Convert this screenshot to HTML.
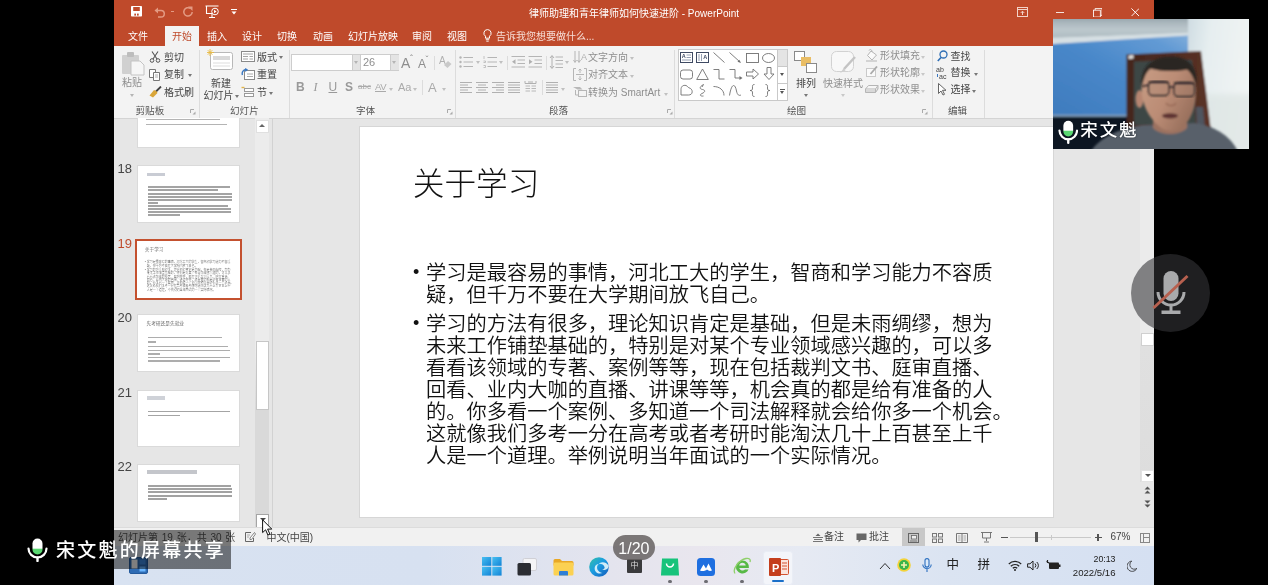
<!DOCTYPE html>
<html lang="zh-CN">
<head>
<meta charset="utf-8">
<title>律师助理和青年律师如何快速进阶 - PowerPoint</title>
<style>
*{box-sizing:border-box;margin:0;padding:0}
html,body{width:1268px;height:585px;overflow:hidden;background:#000}
body{position:relative;font-family:"Liberation Sans","Noto Sans CJK SC",sans-serif;color:#333;font-size:11px}
#root{position:absolute;left:0;top:0;width:1268px;height:585px;overflow:hidden;background:#000;will-change:transform}
.a{position:absolute}
.t{position:absolute;white-space:nowrap;line-height:1}
#ppt{left:114px;top:0;width:1040px;height:585px;background:#e6e6e6;overflow:hidden}
#titlebar{left:0;top:0;width:1040px;height:46px;background:#bf4a2b}
#ribbon{left:0;top:46px;width:1040px;height:73px;background:#f3f3f3;border-bottom:1px solid #d4d4d4}
.tab{position:absolute;top:31.800px;color:#fff;font-size:10px;white-space:nowrap;line-height:1}
.rl{position:absolute;font-size:10px;color:#444;white-space:nowrap;line-height:1}
.rd{position:absolute;font-size:10px;color:#8e8e8e;white-space:nowrap;line-height:1}
.gl{position:absolute;top:59px;font-size:9.6px;color:#555;white-space:nowrap;line-height:1}
.sep{position:absolute;top:50px;width:1px;height:64px;background:#dcdcdc}
.thumb{position:absolute;left:22.5px;width:103px;height:58px;background:#fff;border:1px solid #dadada}
.num{position:absolute;left:3.5px;font-size:13px;color:#444;line-height:1}
.tl{position:absolute;height:1px;background:#b9b9b9}
#slide{left:246px;top:127px;width:693px;height:390px;background:#fff;box-shadow:0 0 0 1px #d6d6d6}
#slide .title{position:absolute;left:52.700px;top:42.200px;font-size:31.700px;font-family:"Liberation Sans","Noto Sans CJK SC",sans-serif;font-weight:300;color:#111;line-height:1;white-space:nowrap}
#slide .body{position:absolute;left:66px;font-size:20.240px;line-height:22px;font-weight:350;margin-top:1px;color:#111;white-space:nowrap}
#slide .bul{position:absolute;left:53px;font-size:18px;line-height:22px;color:#111;margin-top:-0.300px}
.mini{position:absolute;left:0;top:0;width:693px;height:390px;transform:scale(0.1479);transform-origin:0 0}
.mini .title{position:absolute;left:53px;top:42px;font-size:31.5px;font-weight:300;color:#444;line-height:1;white-space:nowrap}
.mini .body{position:absolute;left:66px;font-size:20.2px;line-height:22px;font-weight:300;color:#4a4a4a;white-space:nowrap}
.mini .bul{position:absolute;left:52px;font-size:20px;line-height:22px;color:#555}
.mt{position:absolute;font-size:4.7px;line-height:1;color:#666;white-space:nowrap}
#status{left:0;top:527px;width:1040px;height:19px;background:#f1f1f1;border-top:1px solid #dcdcdc}
#taskbar{left:0;top:546px;width:1040px;height:39px;background:linear-gradient(90deg,#d8e2f1 0%,#d7e1f1 30%,#e4e4ee 48%,#e9e6ee 56%,#e6eaf3 66%,#dbe4f2 80%,#d5e0f2 100%)}
</style>
</head>
<body>
<div id="root">
<div id="ppt" class="a">

  <div id="titlebar" class="a">
    <!-- quick access toolbar -->
    <svg class="a" style="left:16.700px;top:6.300px" width="11" height="10.500" viewBox="0 0 11 10.500"><rect x="0" y="0" width="11" height="10.500" rx="0.800" fill="#fff"/><rect x="2.200" y="1" width="6.600" height="4" fill="#bf4a2b"/><rect x="3.300" y="7.600" width="1.700" height="2" fill="#bf4a2b"/><rect x="6" y="7.600" width="1.700" height="2" fill="#bf4a2b"/></svg>
    <svg class="a" style="left:40px;top:6px" width="12" height="12" viewBox="0 0 12 12"><path d="M2 4.5h5a3.3 3.3 0 0 1 0 6.6H4" fill="none" stroke="#e39a83" stroke-width="1.5"/><path d="M0.5 4.5L4 1.5v6z" fill="#e39a83"/></svg>
    <div class="a" style="left:57px;top:11px;width:3px;height:1px;background:#e39a83"></div>
    <svg class="a" style="left:68px;top:6px" width="12" height="12" viewBox="0 0 12 12"><path d="M8.5 2.5A4.2 4.2 0 1 0 10.2 6" fill="none" stroke="#e39a83" stroke-width="1.5"/><path d="M6 0.5h4.5V5z" fill="#e39a83"/></svg>
    <svg class="a" style="left:91px;top:5px" width="15" height="14" viewBox="0 0 15 14"><path d="M0.5 1h13M1.5 1v7.5h7M7 8.5v4M4 12.5h6" fill="none" stroke="#fff" stroke-width="1.1"/><circle cx="10" cy="6.5" r="3.3" fill="#bf4a2b" stroke="#fff" stroke-width="1"/><path d="M9 4.8v3.4l2.6-1.7z" fill="#fff"/></svg>
    <svg class="a" style="left:117px;top:9px" width="6" height="6" viewBox="0 0 6 6"><path d="M0 0.5h6" stroke="#fff" stroke-width="1"/><path d="M0.5 2.5h5L3 5.5z" fill="#fff"/></svg>
    <div class="t" style="left:0;width:1040px;text-align:center;top:9px;font-size:10px;color:#fff">律师助理和青年律师如何快速进阶 - PowerPoint</div>
    <!-- window controls -->
    <svg class="a" style="left:903px;top:7px" width="11" height="10" viewBox="0 0 11 10"><rect x="0.5" y="0.5" width="10" height="9" fill="none" stroke="#f3d2c8" stroke-width="1"/><path d="M0.5 2.5h10" stroke="#f3d2c8"/><path d="M5.5 8V4.2M3.7 6L5.5 4.2L7.3 6" fill="none" stroke="#f3d2c8" stroke-width="1"/></svg>
    <div class="a" style="left:942.300px;top:12px;width:7.500px;height:1px;background:#f6e3dd"></div>
    <svg class="a" style="left:978.800px;top:7.500px" width="9.500" height="9.500" viewBox="0 0 11 11"><rect x="0.5" y="2.5" width="8" height="8" fill="none" stroke="#fff" stroke-width="1"/><path d="M2.5 2.5v-2h8v8h-2" fill="none" stroke="#fff" stroke-width="1"/></svg>
    <svg class="a" style="left:1016.500px;top:7.700px" width="8.600" height="8.600" viewBox="0 0 11 11"><path d="M0.5 0.5l10 10M10.5 0.5l-10 10" stroke="#fff" stroke-width="1.200"/></svg>
    <!-- tabs -->
    <div class="a" style="left:51px;top:26px;width:34px;height:20px;background:#f3f3f3"></div>
    <div class="tab" style="left:14px">文件</div>
    <div class="tab" style="left:58px;color:#bf4a2b">开始</div>
    <div class="tab" style="left:93px">插入</div>
    <div class="tab" style="left:128px">设计</div>
    <div class="tab" style="left:163px">切换</div>
    <div class="tab" style="left:199px">动画</div>
    <div class="tab" style="left:234px">幻灯片放映</div>
    <div class="tab" style="left:298px">审阅</div>
    <div class="tab" style="left:333px">视图</div>
    <svg class="a" style="left:369px;top:29px" width="9" height="13" viewBox="0 0 9 13"><path d="M4.5 0.6a3.6 3.6 0 0 0-2 6.6v2h4v-2a3.6 3.6 0 0 0-2-6.6z" fill="none" stroke="#fff" stroke-width="1"/><path d="M2.8 10.7h3.4M3.3 12.2h2.4" stroke="#fff" stroke-width="0.9"/></svg>
    <div class="tab" style="left:382px;font-size:10px;color:#f6ddd5">告诉我您想要做什么...</div>
  </div>
  <div id="ribbon" class="a">
    <svg class="a" style="left:7px;top:4px" width="26" height="26" viewBox="0 0 26 26"><rect x="1" y="5" width="17" height="19" rx="1" fill="#d0d0d0"/><rect x="6" y="2" width="7" height="5" rx="1" fill="#bdbdbd"/><path d="M10 11h9l4 4v10H10z" fill="#f6f6f6" stroke="#c4c4c4"/></svg>
    <div class="rd" style="left:8px;top:32px">粘贴</div>
    <div class="a" style="left:15.5px;top:48px;width:0;height:0;border-left:2.5px solid transparent;border-right:2.5px solid transparent;border-top:3px solid #b5b5b5"></div>
    <svg class="a" style="left:35px;top:5px" width="12" height="12" viewBox="0 0 12 12"><path d="M3 0.5L8 8M9 0.5L4 8" stroke="#555" stroke-width="1.1" fill="none"/><circle cx="3" cy="9.5" r="1.8" fill="none" stroke="#555"/><circle cx="9" cy="9.5" r="1.8" fill="none" stroke="#555"/></svg>
    <div class="rl" style="left:50px;top:6.5px">剪切</div>
    <svg class="a" style="left:35px;top:23px" width="12" height="12" viewBox="0 0 12 12"><path d="M0.5 0.5h6v8h-6z" fill="#fff" stroke="#777"/><path d="M4.5 3.5h6v8h-6z" fill="#fff" stroke="#777"/><path d="M6 6h3M6 8h3" stroke="#999" stroke-width="0.8"/></svg>
    <div class="rl" style="left:50px;top:24px">复制</div>
    <div class="a" style="left:73.5px;top:28px;width:0;height:0;border-left:2.5px solid transparent;border-right:2.5px solid transparent;border-top:3px solid #777"></div>
    <svg class="a" style="left:35px;top:40px" width="13" height="12" viewBox="0 0 13 12"><path d="M12 0.5L6.5 6" stroke="#444" stroke-width="1.8"/><path d="M7.5 5.2L5 4l-4.5 5.5 3.5 2L8.5 7z" fill="#d9a63a"/></svg>
    <div class="rl" style="left:50px;top:42px">格式刷</div>
    <div class="gl" style="left:21.5px;top:60.3px">剪贴板</div>
    <svg class="a" style="left:76px;top:62.5px" width="6" height="6" viewBox="0 0 6 6"><path d="M0.5 4V0.5H4" fill="none" stroke="#aaa" stroke-width="1"/><path d="M2.5 5.5h3v-3z" fill="#aaa"/></svg>
    <div class="a" style="left:85px;top:4px;width:1px;height:68px;background:#dcdcdc"></div>
    <svg class="a" style="left:93px;top:3px" width="28" height="25" viewBox="0 0 28 25"><rect x="3.5" y="3.5" width="22" height="17" rx="2" fill="#fff" stroke="#b8b8b8"/><rect x="6" y="7" width="17" height="4" fill="#d9d9d9"/><path d="M6 14h17M6 17h17" stroke="#ddd"/><path d="M3 0v7M0 3.5h7M0.8 1.2l4.5 4.5M5.3 1.2L0.8 5.7" stroke="#e8b93f" stroke-width="0.9"/></svg>
    <div class="rl" style="left:97px;top:32.5px">新建</div>
    <div class="rl" style="left:89.5px;top:45px">幻灯片</div>
    <div class="a" style="left:120.5px;top:49px;width:0;height:0;border-left:2.5px solid transparent;border-right:2.5px solid transparent;border-top:3px solid #777"></div>
    <svg class="a" style="left:127px;top:5px" width="14" height="12" viewBox="0 0 14 12"><rect x="0.5" y="0.5" width="13" height="10" fill="#fff" stroke="#8a8a8a"/><path d="M2 3h10M2 5.5h5M2 8h5M8.5 5.5h3.5M8.5 8h3.5" stroke="#a4a4a4"/></svg>
    <div class="rl" style="left:143px;top:6.5px">版式</div>
    <div class="a" style="left:164.5px;top:10px;width:0;height:0;border-left:2.5px solid transparent;border-right:2.5px solid transparent;border-top:3px solid #777"></div>
    <svg class="a" style="left:127px;top:22px" width="14" height="13" viewBox="0 0 14 13"><rect x="3.5" y="2.5" width="10" height="9" fill="#fff" stroke="#8a8a8a"/><path d="M6 6h6M6 8.5h6" stroke="#aaa"/><path d="M5.5 1.5A4 4 0 0 0 1.5 7" fill="none" stroke="#3a78c2" stroke-width="1.4"/><path d="M4 0l3.2 1.8L4.3 4z" fill="#3a78c2"/></svg>
    <div class="rl" style="left:143px;top:24px">重置</div>
    <svg class="a" style="left:127px;top:40px" width="14" height="12" viewBox="0 0 14 12"><path d="M0.5 1.5h3" stroke="#e2b54a" stroke-width="1.4"/><rect x="3.5" y="2.5" width="9" height="3" fill="#fff" stroke="#999"/><rect x="3.5" y="7.5" width="9" height="3" fill="#fff" stroke="#999"/></svg>
    <div class="rl" style="left:143px;top:42px">节</div>
    <div class="a" style="left:155.0px;top:46px;width:0;height:0;border-left:2.5px solid transparent;border-right:2.5px solid transparent;border-top:3px solid #777"></div>
    <div class="gl" style="left:116px;top:60.3px">幻灯片</div>
    <div class="a" style="left:175px;top:4px;width:1px;height:68px;background:#dcdcdc"></div>
    <div class="a" style="left:176.5px;top:8px;width:62px;height:17px;background:#fff;border:1px solid #cdcdcd"></div>
    <div class="a" style="left:238.5px;top:8px;width:8px;height:17px;background:#e4e4e4;border-top:1px solid #cdcdcd;border-bottom:1px solid #cdcdcd"></div>
    <div class="a" style="left:240.0px;top:15px;width:0;height:0;border-left:2.5px solid transparent;border-right:2.5px solid transparent;border-top:3px solid #b5b5b5"></div>
    <div class="a" style="left:246px;top:8px;width:31px;height:17px;background:#fff;border:1px solid #cdcdcd"></div>
    <div class="rd" style="left:249px;top:11px;font-size:11px">26</div>
    <div class="a" style="left:276.5px;top:8px;width:8px;height:17px;background:#e4e4e4;border-top:1px solid #cdcdcd;border-bottom:1px solid #cdcdcd"></div>
    <div class="a" style="left:278.0px;top:15px;width:0;height:0;border-left:2.5px solid transparent;border-right:2.5px solid transparent;border-top:3px solid #b5b5b5"></div>
    <div class="rd" style="left:287px;top:10px;font-size:14px">A</div>
    <div class="rd" style="left:296px;top:8px;font-size:9px">ˆ</div>
    <div class="rd" style="left:304px;top:12px;font-size:12px">A</div>
    <div class="rd" style="left:311.5px;top:9px;font-size:9px">ˇ</div>
    <div class="a" style="left:320px;top:10px;width:1px;height:14px;background:#dcdcdc"></div>
    <svg class="a" style="left:325px;top:9px" width="13" height="14" viewBox="0 0 13 14"><text x="0" y="9" font-size="10" fill="#b0b0b0" font-family="Liberation Sans,sans-serif">A</text><path d="M5 10l4-4 3.5 3-4 4z" fill="#c9c9c9"/></svg>
    <div class="rd" style="left:182px;top:34.5px;font-size:12px;font-weight:bold;color:#999">B</div>
    <div class="rd" style="left:199.5px;top:34.5px;font-size:12px;font-style:italic;font-family:'Liberation Serif',serif;color:#999">I</div>
    <div class="rd" style="left:214.5px;top:34.5px;font-size:12px;text-decoration:underline;color:#999">U</div>
    <div class="rd" style="left:231px;top:34.5px;font-size:12px;font-weight:bold;color:#999">S</div>
    <div class="rd" style="left:244px;top:37.0px;font-size:8px;text-decoration:line-through;color:#aaa">abc</div>
    <div class="rd" style="left:261px;top:35.5px;font-size:9.5px;text-decoration:underline;color:#aaa;letter-spacing:-0.5px">AV</div>
    <div class="a" style="left:274.5px;top:42px;width:0;height:0;border-left:2.5px solid transparent;border-right:2.5px solid transparent;border-top:3px solid #c0c0c0"></div>
    <div class="rd" style="left:284px;top:35.5px;font-size:11px;color:#aaa">Aa</div>
    <div class="a" style="left:298.5px;top:42px;width:0;height:0;border-left:2.5px solid transparent;border-right:2.5px solid transparent;border-top:3px solid #c0c0c0"></div>
    <div class="a" style="left:307.5px;top:34px;width:1px;height:15px;background:#dcdcdc"></div>
    <div class="rd" style="left:314px;top:35px;font-size:13px;color:#aaa">A</div>
    <div class="a" style="left:327.5px;top:42px;width:0;height:0;border-left:2.5px solid transparent;border-right:2.5px solid transparent;border-top:3px solid #c0c0c0"></div>
    <div class="gl" style="left:242px;top:60.3px">字体</div>
    <svg class="a" style="left:333px;top:62.5px" width="6" height="6" viewBox="0 0 6 6"><path d="M0.5 4V0.5H4" fill="none" stroke="#aaa" stroke-width="1"/><path d="M2.5 5.5h3v-3z" fill="#aaa"/></svg>
    <div class="a" style="left:340.5px;top:4px;width:1px;height:68px;background:#dcdcdc"></div>
    <svg class="a" style="left:345px;top:9px" width="15" height="14" viewBox="0 0 15 14"><circle cx="1.5" cy="2.5" r="1.2" fill="#b5b5b5"/><circle cx="1.5" cy="7" r="1.2" fill="#b5b5b5"/><circle cx="1.5" cy="11.5" r="1.2" fill="#b5b5b5"/><path d="M4.5 2.5H14M4.5 7H14M4.5 11.5H14" stroke="#b5b5b5"/></svg>
    <div class="a" style="left:361.5px;top:15px;width:0;height:0;border-left:2.5px solid transparent;border-right:2.5px solid transparent;border-top:3px solid #c0c0c0"></div>
    <svg class="a" style="left:369px;top:9px" width="15" height="14" viewBox="0 0 15 14"><path d="M1 1v3M0.5 6h2v1.5h-2M0.5 10.5h2v2h-2" stroke="#b5b5b5" fill="none" stroke-width="0.8"/><path d="M4.5 2.5H14M4.5 7H14M4.5 11.5H14" stroke="#b5b5b5"/></svg>
    <div class="a" style="left:385.0px;top:15px;width:0;height:0;border-left:2.5px solid transparent;border-right:2.5px solid transparent;border-top:3px solid #c0c0c0"></div>
    <div class="a" style="left:393px;top:10px;width:1px;height:14px;background:#dcdcdc"></div>
    <svg class="a" style="left:397px;top:9px" width="15" height="14" viewBox="0 0 15 14"><path d="M0.5 1.5H14M6.5 5H14M6.5 8.5H14M0.5 12H14" stroke="#b5b5b5"/><path d="M4.5 4.2v5L1 6.7z" fill="#b0b0b0"/></svg>
    <svg class="a" style="left:414px;top:9px" width="15" height="14" viewBox="0 0 15 14"><path d="M0.5 1.5H14M6.5 5H14M6.5 8.5H14M0.5 12H14" stroke="#b5b5b5"/><path d="M1 4.2v5l3.5-2.5z" fill="#b0b0b0"/></svg>
    <div class="a" style="left:432px;top:10px;width:1px;height:14px;background:#dcdcdc"></div>
    <svg class="a" style="left:435px;top:8px" width="15" height="16" viewBox="0 0 15 16"><path d="M6.5 3H14M6.5 6.5H14M6.5 10H14M6.5 13.5H14" stroke="#b5b5b5"/><path d="M3 2v12M1 4l2-2.5L5 4M1 12l2 2.5L5 12" fill="none" stroke="#b0b0b0" stroke-width="1"/></svg>
    <div class="a" style="left:451.0px;top:15px;width:0;height:0;border-left:2.5px solid transparent;border-right:2.5px solid transparent;border-top:3px solid #c0c0c0"></div>
    <svg class="a" style="left:459px;top:4px" width="15" height="14" viewBox="0 0 15 14"><path d="M2 1v11M0.5 10L2 12.5 3.5 10M6 1v11M4.5 10L6 12.5 7.5 10" fill="none" stroke="#b5b5b5"/><text x="8" y="10" font-size="9" fill="#b0b0b0" font-family="Liberation Sans,sans-serif">A</text></svg>
    <div class="rd" style="left:474px;top:6.5px">文字方向</div>
    <div class="a" style="left:515.5px;top:11px;width:0;height:0;border-left:2.5px solid transparent;border-right:2.5px solid transparent;border-top:3px solid #c0c0c0"></div>
    <svg class="a" style="left:459px;top:22px" width="15" height="14" viewBox="0 0 15 14"><path d="M3 0.5H0.5v12H3M11 0.5h2.5v12H11" fill="none" stroke="#b5b5b5"/><path d="M3 6.5h8" stroke="#b5b5b5"/><path d="M7 1v4M5.5 2.5L7 1l1.5 1.5M7 12V8M5.5 10.5L7 12l1.5-1.5" fill="none" stroke="#b0b0b0" stroke-width="0.9"/></svg>
    <div class="rd" style="left:474px;top:24px">对齐文本</div>
    <div class="a" style="left:515.5px;top:29px;width:0;height:0;border-left:2.5px solid transparent;border-right:2.5px solid transparent;border-top:3px solid #c0c0c0"></div>
    <svg class="a" style="left:459px;top:40px" width="15" height="13" viewBox="0 0 15 13"><path d="M0 1h7l2.5 2.5H4.5z" fill="#b8b8b8"/><rect x="5.500" y="4.5" width="8" height="6" fill="#f3f3f3" stroke="#b5b5b5"/><path d="M2.500 4v5h3" fill="none" stroke="#b5b5b5"/></svg>
    <div class="rd" style="left:474px;top:42px">转换为 SmartArt</div>
    <div class="a" style="left:550.0px;top:47px;width:0;height:0;border-left:2.5px solid transparent;border-right:2.5px solid transparent;border-top:3px solid #c0c0c0"></div>
    <svg class="a" style="left:345.5px;top:35px" width="12" height="13" viewBox="0 0 12 13"><path d="M0 1.5h12" stroke="#b0b0b0"/><path d="M0 4.0h8" stroke="#b0b0b0"/><path d="M0 6.5h12" stroke="#b0b0b0"/><path d="M0 9.0h8" stroke="#b0b0b0"/><path d="M0 11.5h12" stroke="#b0b0b0"/></svg>
    <svg class="a" style="left:361.5px;top:35px" width="12" height="13" viewBox="0 0 12 13"><path d="M0 1.5h12" stroke="#b0b0b0"/><path d="M2 4.0h8" stroke="#b0b0b0"/><path d="M0 6.5h12" stroke="#b0b0b0"/><path d="M2 9.0h8" stroke="#b0b0b0"/><path d="M0 11.5h12" stroke="#b0b0b0"/></svg>
    <svg class="a" style="left:377.5px;top:35px" width="12" height="13" viewBox="0 0 12 13"><path d="M0 1.5h12" stroke="#b0b0b0"/><path d="M4 4.0h8" stroke="#b0b0b0"/><path d="M0 6.5h12" stroke="#b0b0b0"/><path d="M4 9.0h8" stroke="#b0b0b0"/><path d="M0 11.5h12" stroke="#b0b0b0"/></svg>
    <svg class="a" style="left:394px;top:35px" width="12" height="13" viewBox="0 0 12 13"><path d="M0 1.5h12" stroke="#b0b0b0"/><path d="M0 4.0h12" stroke="#b0b0b0"/><path d="M0 6.5h12" stroke="#b0b0b0"/><path d="M0 9.0h12" stroke="#b0b0b0"/><path d="M0 11.5h12" stroke="#b0b0b0"/></svg>
    <svg class="a" style="left:410px;top:34px" width="14" height="14" viewBox="0 0 14 14"><path d="M1 1v2.5h11V1" fill="none" stroke="#b0b0b0"/><path d="M1.5 6h4.5M1.500 8.5h4.500M1.500 11h4.500M7.500 6h4.500M7.500 8.500h4.500M7.500 11h4.500" stroke="#b8b8b8"/><path d="M4 2h5" stroke="#b0b0b0"/></svg>
    <div class="a" style="left:428px;top:34px;width:1px;height:15px;background:#dcdcdc"></div>
    <svg class="a" style="left:432px;top:35px" width="12" height="13" viewBox="0 0 12 13"><path d="M0 1.5h12" stroke="#b0b0b0"/><path d="M0 4.0h12" stroke="#b0b0b0"/><path d="M0 6.5h12" stroke="#b0b0b0"/><path d="M0 9.0h12" stroke="#b0b0b0"/><path d="M0 11.5h12" stroke="#b0b0b0"/></svg>
    <div class="a" style="left:447.0px;top:42px;width:0;height:0;border-left:2.5px solid transparent;border-right:2.5px solid transparent;border-top:3px solid #c0c0c0"></div>
    <div class="gl" style="left:435px;top:60.3px">段落</div>
    <svg class="a" style="left:552.5px;top:62.5px" width="6" height="6" viewBox="0 0 6 6"><path d="M0.5 4V0.5H4" fill="none" stroke="#aaa" stroke-width="1"/><path d="M2.5 5.5h3v-3z" fill="#aaa"/></svg>
    <div class="a" style="left:560px;top:4px;width:1px;height:68px;background:#dcdcdc"></div>
    <div class="a" style="left:564px;top:2.5px;width:110px;height:52px;background:#fff;border:1px solid #c9c9c9"></div>
    <div class="a" style="left:663px;top:2.5px;width:11px;height:52px;border:1px solid #c9c9c9;background:#fff"></div>
    <div class="a" style="left:664px;top:3.5px;width:9px;height:16px;background:#e4e4e4"></div>
    <div class="a" style="left:663px;top:20px;width:11px;height:1px;background:#c9c9c9"></div>
    <div class="a" style="left:663px;top:37px;width:11px;height:1px;background:#c9c9c9"></div>
    <div class="a" style="left:666.0px;top:27px;width:0;height:0;border-left:2.5px solid transparent;border-right:2.5px solid transparent;border-top:3px solid #555"></div>
    <div class="a" style="left:666px;top:42.5px;width:5px;height:1px;background:#555"></div>
    <div class="a" style="left:666.0px;top:45px;width:0;height:0;border-left:2.5px solid transparent;border-right:2.5px solid transparent;border-top:3px solid #555"></div>
    <svg class="a" style="left:566px;top:6px" width="13" height="11" viewBox="0 0 13 11"><rect x="0.5" y="0.5" width="12" height="10" fill="#fff" stroke="#3f4a63"/><text x="1.800" y="6" font-size="5.500" font-weight="bold" fill="#3f4a63" font-family="Liberation Sans,sans-serif">A</text><path d="M6.500 3h4.500M6.500 5.500h4.500M2 8h9" stroke="#7a86a0" stroke-width="0.800"/></svg>
    <svg class="a" style="left:582px;top:6px" width="13" height="11" viewBox="0 0 13 11"><rect x="0.5" y="0.5" width="12" height="10" fill="#fff" stroke="#3f4a63"/><path d="M3 2v7M5.500 2v7" stroke="#7a86a0" stroke-width="0.800"/><text x="7.300" y="6.500" font-size="5.500" font-weight="bold" fill="#3f4a63" font-family="Liberation Sans,sans-serif">A</text></svg>
    <svg class="a" style="left:599px;top:6px" width="12" height="11" viewBox="0 0 12 11"><path d="M0.5 0.5l11 10" stroke="#707070" stroke-width="0.9"/></svg>
    <svg class="a" style="left:615px;top:6px" width="13" height="12" viewBox="0 0 13 12"><path d="M0.5 0.5l10.500 9.500" stroke="#707070" stroke-width="0.9"/><path d="M12 11L8.500 9.800l1.800-2z" fill="#707070"/></svg>
    <svg class="a" style="left:632px;top:7px" width="13" height="10" viewBox="0 0 13 10"><rect x="0.5" y="0.5" width="12" height="9" fill="none" stroke="#707070" stroke-width="0.9"/></svg>
    <svg class="a" style="left:648px;top:7px" width="13" height="10" viewBox="0 0 13 10"><ellipse cx="6.500" cy="5" rx="6" ry="4.500" fill="none" stroke="#707070" stroke-width="0.9"/></svg>
    <svg class="a" style="left:566px;top:23px" width="13" height="11" viewBox="0 0 13 11"><rect x="0.5" y="1" width="12" height="9" rx="2.500" fill="none" stroke="#707070" stroke-width="0.9"/></svg>
    <svg class="a" style="left:582px;top:22px" width="13" height="12" viewBox="0 0 13 12"><path d="M6.500 1L12.300 11.500H0.700z" fill="none" stroke="#707070" stroke-width="0.9"/></svg>
    <svg class="a" style="left:599px;top:22px" width="12" height="12" viewBox="0 0 12 12"><path d="M0.500 1.500h5.500v9.500h5.500" fill="none" stroke="#707070" stroke-width="0.9"/></svg>
    <svg class="a" style="left:615px;top:22px" width="14" height="13" viewBox="0 0 14 13"><path d="M0.500 1.500h5.500v8.500h5" fill="none" stroke="#707070" stroke-width="0.9"/><path d="M13.500 10l-3-2v4z" fill="#707070"/></svg>
    <svg class="a" style="left:632px;top:22px" width="13" height="12" viewBox="0 0 13 12"><path d="M0.500 4h6.500V1L12.500 6 7 11V8H0.500z" fill="none" stroke="#707070" stroke-width="0.9"/></svg>
    <svg class="a" style="left:649px;top:21px" width="12" height="13" viewBox="0 0 12 13"><path d="M4 0.500h4v6.500h3L6 12.500 1 7h3z" fill="none" stroke="#707070" stroke-width="0.9"/></svg>
    <svg class="a" style="left:566px;top:38px" width="13" height="12" viewBox="0 0 13 12"><path d="M1 11V5.500C1 2.500 3 0.800 6 1.500 7.500 2 8 3.500 9 3.800c2 0.600 3.200 2 3.200 4C12.200 10 10.500 11 8.500 11z" fill="none" stroke="#707070" stroke-width="0.9"/></svg>
    <svg class="a" style="left:583px;top:38px" width="11" height="13" viewBox="0 0 11 13"><path d="M6.500 0.500C2 3 2.500 5 5.500 5.500s3 2.500-0.500 4c-3 1.300-1.500 3 1.500 2.500M5 3l1.500-2.500" fill="none" stroke="#707070" stroke-width="0.9"/></svg>
    <svg class="a" style="left:599px;top:39px" width="12" height="11" viewBox="0 0 12 11"><path d="M0.500 1.500C6.500 1.500 11 5 11 10.500" fill="none" stroke="#707070" stroke-width="0.9"/></svg>
    <svg class="a" style="left:615px;top:39px" width="13" height="11" viewBox="0 0 13 11"><path d="M0.500 10.500C2.500 -2 6 -2 7.500 6c0.800 4 2.500 5 4.500 4" fill="none" stroke="#707070" stroke-width="0.9"/></svg>
    <svg class="a" style="left:635px;top:38px" width="6" height="13" viewBox="0 0 6 13"><path d="M5.500 0.500C3 0.500 3.500 2 3.500 4S3 6.500 1 6.500C3 6.500 3.500 7 3.500 9s-0.500 3.500 2 3.500" fill="none" stroke="#707070" stroke-width="0.9"/></svg>
    <svg class="a" style="left:651px;top:38px" width="6" height="13" viewBox="0 0 6 13"><path d="M0.500 0.500C3 0.500 2.500 2 2.500 4S3 6.500 5 6.500C3 6.500 2.500 7 2.500 9s0.500 3.500-2 3.500" fill="none" stroke="#707070" stroke-width="0.9"/></svg>
    <svg class="a" style="left:680px;top:5px" width="24" height="23" viewBox="0 0 24 23"><rect x="0.500" y="0.500" width="10" height="9" fill="#fff" stroke="#8a8a8a"/><rect x="7" y="6" width="10" height="9" fill="#e9bd64"/><rect x="12.500" y="12.500" width="10" height="9" fill="#fff" stroke="#8a8a8a"/></svg>
    <div class="rl" style="left:682px;top:32.5px">排列</div>
    <div class="a" style="left:690.0px;top:48px;width:0;height:0;border-left:2.5px solid transparent;border-right:2.5px solid transparent;border-top:3px solid #777"></div>
    <svg class="a" style="left:716px;top:5px" width="27" height="24" viewBox="0 0 27 24"><rect x="1.500" y="0.500" width="22" height="20" rx="5" fill="#f8f8f8" stroke="#d2d2d2"/><path d="M25 6L14 18" stroke="#c4c4c4" stroke-width="2.500"/><path d="M14 17l-4 5 5.500-2.500z" fill="#cfcfcf"/></svg>
    <div class="rd" style="left:709px;top:32.5px">快速样式</div>
    <div class="a" style="left:726.5px;top:48px;width:0;height:0;border-left:2.5px solid transparent;border-right:2.5px solid transparent;border-top:3px solid #c8c8c8"></div>
    <svg class="a" style="left:752px;top:3px" width="12" height="13" viewBox="0 0 12 13"><path d="M5 2L1.500 6.500 6 11l4.500-5z" fill="#fafafa" stroke="#b5b5b5"/><path d="M3 1.500C3.500 0 6 0 6 3" fill="none" stroke="#b5b5b5"/><path d="M0 12h11" stroke="#c9c9c9" stroke-width="1.500"/></svg>
    <div class="rd" style="left:766px;top:5px">形状填充</div>
    <div class="a" style="left:807.0px;top:10px;width:0;height:0;border-left:2.5px solid transparent;border-right:2.5px solid transparent;border-top:3px solid #c8c8c8"></div>
    <svg class="a" style="left:752px;top:20px" width="12" height="13" viewBox="0 0 12 13"><rect x="0.500" y="2.500" width="9" height="8" fill="#fafafa" stroke="#c9c9c9"/><path d="M11 0.500L4.500 8" stroke="#aaa" stroke-width="1.800"/></svg>
    <div class="rd" style="left:766px;top:22px">形状轮廓</div>
    <div class="a" style="left:807.0px;top:27px;width:0;height:0;border-left:2.5px solid transparent;border-right:2.5px solid transparent;border-top:3px solid #c8c8c8"></div>
    <svg class="a" style="left:751px;top:37px" width="14" height="12" viewBox="0 0 14 12"><path d="M0.500 6L3.500 2.500h9.500L10.500 6z" fill="#f6f6f6" stroke="#b5b5b5"/><path d="M0.500 6v3.500h10V6M10.500 9.500L13 6V2.500" fill="#d8d8d8" stroke="#b5b5b5"/></svg>
    <div class="rd" style="left:766px;top:39px">形状效果</div>
    <div class="a" style="left:807.0px;top:44px;width:0;height:0;border-left:2.5px solid transparent;border-right:2.5px solid transparent;border-top:3px solid #c8c8c8"></div>
    <div class="gl" style="left:673px;top:60.3px">绘图</div>
    <svg class="a" style="left:808px;top:62.5px" width="6" height="6" viewBox="0 0 6 6"><path d="M0.5 4V0.5H4" fill="none" stroke="#aaa" stroke-width="1"/><path d="M2.5 5.5h3v-3z" fill="#aaa"/></svg>
    <div class="a" style="left:818px;top:4px;width:1px;height:68px;background:#dcdcdc"></div>
    <svg class="a" style="left:823px;top:4px" width="11" height="12" viewBox="0 0 11 12"><circle cx="6.500" cy="4.500" r="3.500" fill="none" stroke="#2f6fb5" stroke-width="1.300"/><path d="M4 7.500L0.800 11" stroke="#2f6fb5" stroke-width="1.600"/></svg>
    <div class="rl" style="left:836.5px;top:5.5px">查找</div>
    <svg class="a" style="left:822px;top:20px" width="13" height="13" viewBox="0 0 13 13"><text x="0" y="6" font-size="7" fill="#444" font-family="Liberation Sans,sans-serif">ab</text><text x="3" y="12.500" font-size="7" fill="#444" font-family="Liberation Sans,sans-serif">ac</text><path d="M1.500 8v3" stroke="#3a78c2"/></svg>
    <div class="rl" style="left:836.5px;top:22px">替换</div>
    <div class="a" style="left:860.0px;top:27px;width:0;height:0;border-left:2.5px solid transparent;border-right:2.5px solid transparent;border-top:3px solid #777"></div>
    <svg class="a" style="left:824px;top:37px" width="9" height="13" viewBox="0 0 9 13"><path d="M0.500 0.500v10l2.500-2.500 2 4 1.500-0.700-2-4H8z" fill="#fff" stroke="#555" stroke-width="0.900"/></svg>
    <div class="rl" style="left:836.5px;top:39px">选择</div>
    <div class="a" style="left:857.5px;top:44px;width:0;height:0;border-left:2.5px solid transparent;border-right:2.5px solid transparent;border-top:3px solid #777"></div>
    <div class="gl" style="left:834px;top:60.3px">编辑</div>
    <div class="a" style="left:870px;top:4px;width:1px;height:68px;background:#dcdcdc"></div>
  </div>
  <!-- thumbnail pane -->
  <div id="pane" class="a" style="left:0;top:0;width:158px;height:585px">
    <div class="a" style="left:157.500px;top:119px;width:1px;height:408px;background:#d2d2d2"></div>
    <div class="a" style="left:141px;top:118px;width:14px;height:409px;background:linear-gradient(180deg,#ececec 0,#ececec 230px,#d9d9d9 290px,#d9d9d9 100%)"></div>
    <div class="a" style="left:141.5px;top:119.5px;width:13px;height:13px;background:#fff;border:1px solid #e0e0e0"></div>
    <div class="a" style="left:145px;top:124px;width:0;height:0;border-left:3px solid transparent;border-right:3px solid transparent;border-bottom:3.5px solid #666"></div>
    <div class="a" style="left:141.5px;top:341px;width:13.500px;height:68.500px;background:#fff;border:1px solid #c6c6c6"></div>
    <div class="a" style="left:141.5px;top:514px;width:13.5px;height:13.5px;background:#fff;border:1px solid #a5a5a5"></div>
    <div class="a" style="left:145.5px;top:518px;width:0;height:0;border-left:3px solid transparent;border-right:3px solid transparent;border-top:3.5px solid #444"></div>
    <div class="thumb" style="top:118px;height:30px;border-top:none"><div class="tl" style="left:8.500px;top:0.500px;width:74px;height:1.500px;background:#b4b4b4"></div><div class="tl" style="left:8.500px;top:5.500px;width:81px;height:1.500px;background:#b4b4b4"></div></div>
    <div class="num" style="top:161.5px">18</div><div class="thumb" style="top:165px;height:58px"><div class="tl" style="left:9px;top:6.5px;width:18px;height:3.5px;background:#c9ccd4"></div><div class="tl" style="left:10px;top:20px;width:82px;height:2px;background:#a4a4a4"></div><div class="tl" style="left:10px;top:23px;width:70px;height:2px;background:#a4a4a4"></div><div class="tl" style="left:10px;top:26.5px;width:84px;height:2px;background:#a4a4a4"></div><div class="tl" style="left:10px;top:29.5px;width:84px;height:2px;background:#a4a4a4"></div><div class="tl" style="left:10px;top:32.5px;width:84px;height:2px;background:#a4a4a4"></div><div class="tl" style="left:10px;top:35.5px;width:10px;height:2px;background:#a4a4a4"></div><div class="tl" style="left:10px;top:38.5px;width:80px;height:2px;background:#a4a4a4"></div><div class="tl" style="left:10px;top:42px;width:83px;height:2px;background:#a4a4a4"></div><div class="tl" style="left:10px;top:45px;width:83px;height:2px;background:#a4a4a4"></div><div class="tl" style="left:10px;top:48px;width:32px;height:2px;background:#a4a4a4"></div></div>
    <div class="num" style="top:236.5px;color:#bf4a2b">19</div><div class="thumb" style="left:21px;top:238.5px;width:106.5px;height:61.5px;border:2px solid #c4512f"><div class="mini"><div class="title">关于学习</div><div class="bul" style="top:134px">•</div><div class="body" style="top:134px">学习是最容易的事情，河北工大的学生，智商和学习能力不容质<br>疑，但千万不要在大学期间放飞自己。</div><div class="bul" style="top:185px">•</div><div class="body" style="top:185px">学习的方法有很多，理论知识肯定是基础，但是未雨绸缪，想为<br>未来工作铺垫基础的，特别是对某个专业领域感兴趣的，可以多<br>看看该领域的专著、案例等等，现在包括裁判文书、庭审直播、<br>回看、业内大咖的直播、讲课等等，机会真的都是给有准备的人<br>的。你多看一个案例、多知道一个司法解释就会给你多一个机会。<br>这就像我们多考一分在高考或者考研时能淘汰几十上百甚至上千<br>人是一个道理。举例说明当年面试的一个实际情况。</div></div></div>
    <div class="num" style="top:310.5px">20</div><div class="thumb" style="top:314px;height:58px"><div class="mt" style="left:9px;top:6.5px">先考研还是先就业</div><div class="tl" style="left:10px;top:21.5px;width:74px;height:1.5px;background:#adadad"></div><div class="tl" style="left:10px;top:26px;width:8px;height:1.5px;background:#adadad"></div><div class="tl" style="left:10px;top:30.5px;width:80px;height:1.5px;background:#adadad"></div><div class="tl" style="left:10px;top:34.5px;width:82px;height:1.5px;background:#adadad"></div><div class="tl" style="left:10px;top:38px;width:12px;height:1.5px;background:#adadad"></div><div class="tl" style="left:10px;top:41.5px;width:82px;height:1.5px;background:#adadad"></div><div class="tl" style="left:10px;top:45px;width:72px;height:1.5px;background:#adadad"></div></div>
    <div class="num" style="top:386.0px">21</div><div class="thumb" style="top:389.5px;height:57.5px"><div class="tl" style="left:9px;top:5.500px;width:18px;height:3.5px;background:#cfd2d8"></div><div class="tl" style="left:10px;top:20px;width:82px;height:1.5px;background:#a4a4a4"></div><div class="tl" style="left:10px;top:24px;width:32px;height:1.5px;background:#a4a4a4"></div></div>
    <div class="num" style="top:460.0px">22</div><div class="thumb" style="top:463.5px;height:58px"><div class="tl" style="left:9px;top:5.500px;width:50px;height:4px;background:#c4c6cb"></div><div class="tl" style="left:10px;top:20px;width:83px;height:2px;background:#a2a2a2"></div><div class="tl" style="left:10px;top:23.400px;width:84px;height:2px;background:#a2a2a2"></div><div class="tl" style="left:10px;top:26.800px;width:84px;height:2px;background:#a2a2a2"></div><div class="tl" style="left:10px;top:30.200px;width:84px;height:2px;background:#a2a2a2"></div><div class="tl" style="left:10px;top:33.600px;width:19px;height:2px;background:#a2a2a2"></div></div>
  </div>
  <!-- editor scrollbar -->
  <div class="a" style="left:1026px;top:118px;width:14px;height:364px;background:linear-gradient(180deg,#ebebeb 0,#ebebeb 215px,#e0e0e0 228px,#dddddd 100%)"></div>
  <div class="a" style="left:1026.5px;top:333px;width:13.5px;height:13px;background:#fff;border:1px solid #d0d0d0"></div>
  <div class="a" style="left:1026.5px;top:469.5px;width:13.5px;height:12px;background:#fff;border:1px solid #e2e2e2"></div>
  <div class="a" style="left:1030.5px;top:474px;width:0;height:0;border-left:3px solid transparent;border-right:3px solid transparent;border-top:3.5px solid #555"></div>
  <svg class="a" style="left:1030px;top:486px" width="7" height="22" viewBox="0 0 7 22"><path d="M0.500 3.500L3.500 0.500l3 3zM0.500 7.500L3.500 4.500l3 3zM0.500 14.500l3 3 3-3zM0.500 18.500l3 3 3-3z" fill="#555"/></svg>
  <div id="slide" class="a">
    <div class="title">关于学习</div>
    <div class="bul" style="top:134px">•</div>
    <div class="body" style="top:134px">学习是最容易的事情，河北工大的学生，智商和学习能力不容质<br>疑，但千万不要在大学期间放飞自己。</div>
    <div class="bul" style="top:185px">•</div>
    <div class="body" style="top:185px">学习的方法有很多，理论知识肯定是基础，但是未雨绸缪，想为<br>未来工作铺垫基础的，特别是对某个专业领域感兴趣的，可以多<br>看看该领域的专著、案例等等，现在包括裁判文书、庭审直播、<br>回看、业内大咖的直播、讲课等等，机会真的都是给有准备的人<br>的。你多看一个案例、多知道一个司法解释就会给你多一个机会。<br>这就像我们多考一分在高考或者考研时能淘汰几十上百甚至上千<br>人是一个道理。举例说明当年面试的一个实际情况。</div>
  </div>
  <div id="status" class="a">
    <div class="t" style="left:4px;top:4.500px;font-size:10px;word-spacing:1px;color:#555">幻灯片第 19 张，共 30 张</div>
    <svg class="a" style="left:130.5px;top:4px" width="11" height="10" viewBox="0 0 11 10"><path d="M6 0.500H0.500v9h8V6" fill="none" stroke="#666"/><path d="M2 3h3M2 5h2" stroke="#999" stroke-width="0.800"/><path d="M9.500 0.500L5 6v1.500h1.500L10.500 2z" fill="#fff" stroke="#666" stroke-width="0.800"/></svg>
    <div class="t" style="left:152.500px;top:4.500px;font-size:10px;color:#444">中文(中国)</div>
    <svg class="a" style="left:698.5px;top:5px" width="10" height="9" viewBox="0 0 10 9"><path d="M0 8.500h10M1 6.500h8M0 4.500h10" stroke="#666" stroke-width="0.900"/><path d="M2.500 3L5 0.500 7.500 3z" fill="#666"/></svg>
    <div class="t" style="left:710px;top:4px;font-size:10px;color:#444">备注</div>
    <svg class="a" style="left:742px;top:4.5px" width="11" height="10" viewBox="0 0 11 10"><path d="M0.500 0.500h10v6.500H5L2.500 9.500V7H0.500z" fill="#666"/></svg>
    <div class="t" style="left:755px;top:4px;font-size:10px;color:#444">批注</div>
    <div class="a" style="left:787.5px;top:0;width:23px;height:18px;background:#c8c8c8"></div>
    <svg class="a" style="left:793.5px;top:4.5px" width="11" height="10" viewBox="0 0 11 10"><rect x="0.500" y="0.500" width="10" height="9" fill="none" stroke="#666"/><rect x="3.500" y="2.500" width="5" height="3.500" fill="#eee" stroke="#666" stroke-width="0.800"/><path d="M2 8h7" stroke="#666" stroke-width="0.800"/></svg>
    <svg class="a" style="left:818px;top:4.5px" width="11" height="10" viewBox="0 0 11 10"><rect x="0.500" y="0.500" width="4" height="3.500" fill="none" stroke="#777"/><rect x="6.500" y="0.500" width="4" height="3.500" fill="none" stroke="#777"/><rect x="0.500" y="6" width="4" height="3.500" fill="none" stroke="#777"/><rect x="6.500" y="6" width="4" height="3.500" fill="none" stroke="#777"/></svg>
    <svg class="a" style="left:842px;top:4.5px" width="12" height="10" viewBox="0 0 12 10"><path d="M0.500 0.500h11v9h-11zM6 0.500v9" fill="none" stroke="#777"/><path d="M2 3h2.500M2 5h2.500M2 7h2.500M7.500 3H10M7.500 5H10M7.500 7H10" stroke="#999" stroke-width="0.800"/></svg>
    <svg class="a" style="left:866.5px;top:4px" width="11" height="11" viewBox="0 0 11 11"><path d="M0 0.500h11M1.500 0.500v5.500h8V0.500M5.500 6v3M3 10h5" fill="none" stroke="#777"/></svg>
    <div class="a" style="left:887px;top:8.5px;width:7px;height:1.5px;background:#555"></div>
    <div class="a" style="left:896px;top:9px;width:81px;height:1px;background:#c9c9c9"></div>
    <div class="a" style="left:936.5px;top:7px;width:1px;height:5px;background:#c9c9c9"></div>
    <div class="a" style="left:920.5px;top:4px;width:3.5px;height:10px;background:#555"></div>
    <div class="a" style="left:980.5px;top:8.5px;width:7px;height:1.500px;background:#555"></div>
    <div class="a" style="left:983.2px;top:5.8px;width:1.500px;height:7px;background:#555"></div>
    <div class="t" style="left:996.5px;top:4px;font-size:10px;color:#444">67%</div>
    <svg class="a" style="left:1026px;top:4.5px" width="10" height="10" viewBox="0 0 10 10"><rect x="0.500" y="0.500" width="9" height="9" fill="none" stroke="#888"/><path d="M3.500 0.500v9M3.500 4.500h6" stroke="#888"/></svg>
  </div>
  <div id="taskbar" class="a">
    <svg class="a" style="left:14.5px;top:11px" width="19" height="17" viewBox="0 0 19 17"><rect x="0.500" y="0.500" width="18" height="16" rx="1.500" fill="#2f6cb4" stroke="#245a9c"/><rect x="2.500" y="2.500" width="6" height="9" fill="#fff"/><rect x="10.500" y="9.500" width="6" height="5" fill="#6bb6ff"/><rect x="10.500" y="2.500" width="6" height="5" fill="#3f8ae0"/></svg>
    <svg class="a" style="left:367.5px;top:11px" width="20" height="19" viewBox="0 0 20 19"><defs><linearGradient id="wg" x1="0" y1="0" x2="1" y2="1"><stop offset="0" stop-color="#49c0f2"/><stop offset="1" stop-color="#1283d6"/></linearGradient></defs><rect x="0" y="0" width="9.300" height="8.800" fill="url(#wg)"/><rect x="10.300" y="0" width="9.300" height="8.800" fill="url(#wg)"/><rect x="0" y="9.800" width="9.300" height="8.800" fill="url(#wg)"/><rect x="10.300" y="9.800" width="9.300" height="8.800" fill="url(#wg)"/></svg>
    <svg class="a" style="left:403px;top:11.5px" width="20" height="18" viewBox="0 0 20 18"><rect x="6" y="0.500" width="13.500" height="12" rx="1.500" fill="#f4f4f6" stroke="#d0d0d6"/><rect x="0.500" y="5" width="13.500" height="12.500" rx="1.500" fill="#2b2d33"/></svg>
    <svg class="a" style="left:438.5px;top:11.5px" width="21" height="18" viewBox="0 0 21 18"><path d="M0.500 2.500a1.500 1.500 0 0 1 1.500-1.500h5l2 2h10a1.500 1.500 0 0 1 1.500 1.500v3h-20z" fill="#e9a825"/><rect x="0.500" y="4.500" width="20" height="13" rx="1.500" fill="#fbd152"/><path d="M6 17.500v-3.500a1 1 0 0 1 1-1h7a1 1 0 0 1 1 1v3.500z" fill="#2f7fd6"/></svg>
    <svg class="a" style="left:475px;top:10.5px" width="20" height="20" viewBox="0 0 20 20"><defs><linearGradient id="eg" x1="0" y1="0" x2="1" y2="1"><stop offset="0" stop-color="#35c1a5"/><stop offset="0.450" stop-color="#1b9de2"/><stop offset="1" stop-color="#1459b8"/></linearGradient></defs><circle cx="10" cy="10" r="9.800" fill="url(#eg)"/><path d="M19.500 8.500C17 4 10.500 4 8.500 8.500c-1.500 3.500 1 7 5 7.500-5.500 2-9-2.500-7.500-6.500C7.500 6 14 5.500 15.500 10c0.500 1.500-1 2.500-2.500 2 3 2.500 7.500-0.500 6.500-3.500z" fill="#dff4fb" opacity="0.92"/></svg>
    <div class="a" style="left:513px;top:13px;width:15px;height:14px;background:#3a3a3c;border-radius:1px"></div>
    <div class="t" style="left:516.5px;top:16px;font-size:8px;color:#ddd">中</div>
    <svg class="a" style="left:547px;top:11.5px" width="18" height="18" viewBox="0 0 18 18"><path d="M1 0.500h16l1 17H0z" fill="#17c37b"/><path d="M5.500 5.500a3.500 3.500 0 0 0 7 0" fill="none" stroke="#fff" stroke-width="1.500"/></svg>
    <svg class="a" style="left:583px;top:11.5px" width="18" height="18" viewBox="0 0 18 18"><rect x="0" y="0" width="18" height="18" rx="3.500" fill="#1f6fe0"/><path d="M3 12.500l3.500-6 2.500 4 2.500-5 3.500 7c-2 0.800-3.500 0.500-5-1-1.500 1.500-4.500 2-7 1z" fill="#fff"/></svg>
    <svg class="a" style="left:619px;top:10.5px" width="19" height="19" viewBox="0 0 19 19"><path d="M9.500 3.500a6.500 6.500 0 1 0 6 9h-3.500a3.500 3.500 0 0 1-5.800-1.500h9.700a6.500 6.500 0 0 0-6.400-7.500zm-3.300 5a3.300 3.300 0 0 1 6.500 0z" fill="#58b947"/><path d="M2 16.500C-1 12 6 3 13 1.500c3-0.600 5 0.500 4 3.500" fill="none" stroke="#8fd06a" stroke-width="1.300"/></svg>
    <div class="a" style="left:648.5px;top:5px;width:30px;height:34px;background:#f3f5fa;border-radius:3px;border:1px solid #e9edf5"></div>
    <svg class="a" style="left:654.5px;top:11.5px" width="20" height="18" viewBox="0 0 20 18"><rect x="6" y="1.500" width="13.500" height="15" rx="1" fill="#fbe3dc" stroke="#d35230"/><path d="M13 5h5M13 8h5M13 11h5" stroke="#d35230" stroke-width="1.200"/><rect x="0" y="0" width="12" height="18" rx="1" fill="#c43e1c"/><text x="3" y="13.500" font-size="11" font-weight="bold" fill="#fff" font-family="Liberation Sans,sans-serif">P</text></svg>
    <div class="a" style="left:658px;top:33.5px;width:12px;height:2.500px;border-radius:1.500px;background:#1a6fc9"></div>
    <div class="a" style="left:553.5px;top:33.5px;width:4.500px;height:3px;border-radius:1.500px;background:#6c6c72"></div>
    <div class="a" style="left:589.5px;top:33.5px;width:4.500px;height:3px;border-radius:1.500px;background:#6c6c72"></div>
    <div class="a" style="left:625.5px;top:33.5px;width:4.500px;height:3px;border-radius:1.500px;background:#6c6c72"></div>
    <svg class="a" style="left:764.5px;top:15.5px" width="12" height="8" viewBox="0 0 12 8"><path d="M1 7l5-5.500L11 7" fill="none" stroke="#333" stroke-width="1"/></svg>
    <svg class="a" style="left:783px;top:12px" width="14" height="14" viewBox="0 0 14 14"><circle cx="7" cy="7" r="6.800" fill="#f3d33a"/><circle cx="7" cy="7" r="5" fill="#3bb54a"/><path d="M4 7h6M7 4v6" stroke="#f9f3b0" stroke-width="1.600"/></svg>
    <svg class="a" style="left:808px;top:12px" width="10" height="15" viewBox="0 0 10 15"><rect x="3" y="0.600" width="4" height="8.500" rx="2" fill="#dbe9f8" stroke="#2c6fc0" stroke-width="1.100"/><path d="M0.800 6.500a4.200 4.200 0 0 0 8.400 0M5 11v3" fill="none" stroke="#2c6fc0" stroke-width="1.100"/></svg>
    <div class="t" style="left:832.5px;top:12.5px;font-size:12.500px;color:#222">中</div>
    <div class="t" style="left:863.5px;top:12.5px;font-size:12.500px;color:#222">拼</div>
    <svg class="a" style="left:893.5px;top:13.5px" width="14" height="11" viewBox="0 0 14 11"><path d="M0.800 4a8.800 8.800 0 0 1 12.400 0M2.800 6.200a6 6 0 0 1 8.400 0M4.800 8.300a3.200 3.200 0 0 1 4.400 0" fill="none" stroke="#222" stroke-width="1.200"/><circle cx="7" cy="10" r="1" fill="#222"/></svg>
    <svg class="a" style="left:913px;top:13.5px" width="13" height="11" viewBox="0 0 13 11"><path d="M0.600 3.800h2.400L6 1v9L3 7.200H0.600z" fill="none" stroke="#222" stroke-width="1"/><path d="M8 3.500a3 3 0 0 1 0 4M9.800 2a5.200 5.200 0 0 1 0 7" fill="none" stroke="#222" stroke-width="1"/></svg>
    <svg class="a" style="left:932px;top:13.5px" width="15" height="11" viewBox="0 0 15 11"><rect x="3" y="2.500" width="10" height="6.500" rx="1" fill="#222"/><rect x="13" y="4.500" width="1.500" height="2.500" fill="#222"/><path d="M0.500 1.500c2 0 2 2 3.500 2M1.500 0v3" stroke="#222" stroke-width="1.200" fill="none"/></svg>
    <div class="t" style="left:941.5px;top:9px;width:60px;text-align:right;font-size:8.800px;color:#222">20:13</div>
    <div class="t" style="left:941.5px;top:21.5px;width:60px;text-align:right;font-size:9.600px;color:#222">2022/5/16</div>
    <svg class="a" style="left:1012.500px;top:13.500px" width="10.300" height="12.500" viewBox="0 0 12 14"><path d="M5.500 1a6 6 0 1 0 6 8.500A5 5 0 0 1 5.500 1z" fill="none" stroke="#222" stroke-width="0.900"/></svg>
  </div>
</div>
<!-- mouse cursor -->
<svg class="a" style="left:261.500px;top:519.300px" width="12" height="17" viewBox="0 0 12 17"><path d="M0.600 0.800v12.800l3-2.800 2.300 5.200 2-0.900-2.300-5h4.200z" fill="#fff" stroke="#111" stroke-width="1" stroke-linejoin="round"/></svg>
<!-- webcam tile -->
<svg class="a" style="left:1053px;top:19px" width="196" height="130" viewBox="0 0 196 130">
  <defs>
    <filter id="bl" x="-5%" y="-5%" width="110%" height="110%"><feGaussianBlur stdDeviation="1"/></filter>
    <filter id="bl3" x="-10%" y="-10%" width="120%" height="120%"><feGaussianBlur stdDeviation="2.500"/></filter>
    <linearGradient id="blind" x1="0" y1="1" x2="1" y2="0"><stop offset="0" stop-color="#3f7bbd"/><stop offset="0.500" stop-color="#4887c9"/><stop offset="0.850" stop-color="#629ad4"/><stop offset="1" stop-color="#80addb"/></linearGradient>
    <linearGradient id="ceil" x1="0" y1="0" x2="0" y2="1"><stop offset="0" stop-color="#87959c"/><stop offset="0.350" stop-color="#a9b6bc"/><stop offset="0.650" stop-color="#bcc8cd"/><stop offset="1" stop-color="#aebbc1"/></linearGradient>
    <linearGradient id="wall" x1="0" y1="0" x2="1" y2="0.300"><stop offset="0" stop-color="#cfdce2"/><stop offset="0.350" stop-color="#e6eef0"/><stop offset="1" stop-color="#f1f5f4"/></linearGradient>
    <linearGradient id="skin" x1="0" y1="0" x2="1" y2="0.600"><stop offset="0" stop-color="#c89d85"/><stop offset="0.550" stop-color="#bb8c75"/><stop offset="1" stop-color="#99705d"/></linearGradient>
    <linearGradient id="door" x1="0" y1="0" x2="1" y2="0"><stop offset="0" stop-color="#43261e"/><stop offset="1" stop-color="#5c3226"/></linearGradient>
    <clipPath id="cc"><rect x="0" y="0" width="196" height="130"/></clipPath>
  </defs>
  <g clip-path="url(#cc)">
  <rect x="0" y="0" width="196" height="130" fill="#dfe8ea"/>
  <g filter="url(#bl)">
    <rect x="-5" y="-5" width="206" height="140" fill="#dfe8ea"/>
    <path d="M-5 -5H140V14L-5 19z" fill="url(#ceil)"/>
    <path d="M-5 19.500L138 13.500V17L-5 26z" fill="#d6dfe3"/>
    <path d="M-5 25.500L136 16.500V97H-5z" fill="url(#blind)"/>
    <rect x="135" y="-5" width="66" height="140" fill="url(#wall)"/>
    <path d="M150 75h51v60h-51z" fill="#d9e1df" opacity="0.550" filter="url(#bl3)"/>
    <path d="M-5 95.500H76V98H-5z" fill="#7d9bbb"/>
    <path d="M-5 97.800H76V135H-5z" fill="#0f1824"/>
    <path d="M73.500 35.500L148 32L161 135H73.500z" fill="url(#door)"/>
    <path d="M81 42.500L139 41L143 106H81z" fill="#3d4644"/>
    <path d="M75.500 36.500l5-0.500v3.500l-5 0.500z" fill="#e4e4e4"/>
    <path d="M143 88l7 0 2 22h-8z" fill="#50545f"/>
  </g>
  <g filter="url(#bl)">
    <path d="M36 135C46 118 66 110 89 106L142 104C166 108 180 120 186 135z" fill="#58616b"/>
    <path d="M100 100h34v9c-8 8-26 8-34 0z" fill="#9c7260"/>
    <ellipse cx="86.500" cy="80" rx="4" ry="9" fill="#b68571"/>
    <path d="M88.500 70C88 54 98 45 116 45c17 0 27 8 27 27c0 14-4 27-12 35c-7 6.500-18 6.500-25 0C96 99 89 86 88.500 70z" fill="url(#skin)"/>
    <path d="M89 68C86 50 98 37.500 118 37.500c17 0 28 10 25 30c-1.500-8-5-14-9-17c-12 2.500-27 2-37-1c-4 4-6.500 10-8 18.500z" fill="#2b2523"/>
    <ellipse cx="117" cy="96.800" rx="8" ry="2.600" fill="#5d3330"/>
    <path d="M113 84c2 3.500 8 3.500 10 0" fill="none" stroke="#946553" stroke-width="1.400"/>
  </g>
  <g filter="url(#bl)" fill="none" stroke="#2a2426" stroke-width="1.300">
    <rect x="95.500" y="62.500" width="20.500" height="14" rx="4.500" fill="rgba(150,120,110,0.180)"/>
    <rect x="121" y="63.500" width="20.500" height="14" rx="4.500" fill="rgba(150,120,110,0.180)"/>
    <path d="M95.500 63.200h20M121 64.200h20.500" stroke-width="2"/>
    <path d="M116 68h5M95.500 66l-7 1.500"/>
  </g>
  </g>
</svg>
<svg class="a" style="left:1057.500px;top:119.500px" width="20.500" height="24" viewBox="0 0 21 24"><rect x="5.500" y="0.500" width="10" height="16" rx="5" fill="url(#mg)"/><path d="M1.500 10.500a9 9 0 0 0 18 0" fill="none" stroke="#fff" stroke-width="2.200" stroke-linecap="round"/><path d="M10.500 19.500v3.500" stroke="#fff" stroke-width="2.400" stroke-linecap="round"/></svg>
<div class="t" style="left:1080.300px;top:122px;font-size:17.500px;letter-spacing:1.900px;color:#fff;font-weight:500;text-shadow:0 0 2px rgba(0,0,0,0.500)">宋文魁</div>
<!-- overlays -->
<div class="a" style="left:613px;top:534.700px;width:41.800px;height:25.800px;border-radius:13px;background:rgba(104,99,99,0.860)"></div>
<div class="t" style="left:613px;top:540.500px;width:41.800px;text-align:center;font-size:16px;color:#fff">1/20</div>
<div class="a" style="left:0;top:529.500px;width:231px;height:39.500px;background:rgba(0,0,0,0.500)"></div>
<svg class="a" style="left:27px;top:538px" width="21" height="24" viewBox="0 0 21 24"><defs><linearGradient id="mg" x1="0" y1="0" x2="0" y2="1"><stop offset="0.600" stop-color="#fff"/><stop offset="0.680" stop-color="#5ad872"/></linearGradient></defs><rect x="5.500" y="0.500" width="10" height="16" rx="5" fill="url(#mg)"/><path d="M1.500 10.500a9 9 0 0 0 18 0" fill="none" stroke="#fff" stroke-width="2.200" stroke-linecap="round"/><path d="M10.500 19.500v3.500" stroke="#fff" stroke-width="2.400" stroke-linecap="round"/></svg>
<div class="t" style="left:56px;top:540.500px;font-size:19px;letter-spacing:2.250px;color:#fff;font-weight:500">宋文魁的屏幕共享</div>
<div class="a" style="left:1131px;top:254px;width:79px;height:78px;border-radius:50%;background:rgba(52,53,56,0.590)"></div>
<svg class="a" style="left:1150px;top:268px" width="42" height="50" viewBox="0 0 42 50"><rect x="13.500" y="3" width="15" height="30" rx="7.500" fill="#a9aaac"/><path d="M8 24a13 13 0 0 0 26 0" fill="none" stroke="#a9aaac" stroke-width="3"/><path d="M21 37v6" stroke="#a9aaac" stroke-width="3"/><rect x="11.500" y="42.500" width="19" height="3.500" fill="#a9aaac"/><path d="M37.500 8L3.500 40" stroke="#b7604f" stroke-width="3"/></svg>
</div>
</body>
</html>
